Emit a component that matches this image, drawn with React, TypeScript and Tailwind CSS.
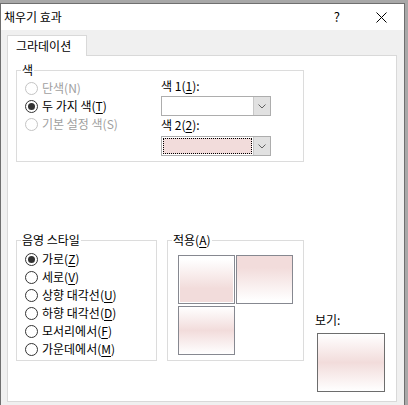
import type { ReactNode } from "react";

const font = { fontFamily: '"Noto Sans CJK KR", "Noto Sans", sans-serif' };

const Radio = ({
  label,
  checked = false,
  disabled = false,
}: {
  label: ReactNode;
  checked?: boolean;
  disabled?: boolean;
}) => (
  <div className="flex h-[18px] items-center gap-[4px]">
    <span
      className={`flex h-[13px] w-[13px] items-center justify-center rounded-full border bg-white ${
        disabled ? "border-[#c4c4c4]" : "border-[#333333]"
      }`}
    >
      {checked && <span className="h-[7px] w-[7px] rounded-full bg-[#333333]" />}
    </span>
    <span className={disabled ? "text-[#a0a0a0]" : "text-black"}>{label}</span>
  </div>
);

const Group = ({
  label,
  className,
  children,
}: {
  label: ReactNode;
  className: string;
  children: ReactNode;
}) => (
  <div className={`flex flex-col border border-[#dcdcdc] ${className}`}>
    <span className="-mt-[9px] ml-[4px] w-fit bg-white px-[1px] leading-[16px]">{label}</span>
    {children}
  </div>
);

const Combo = ({ focused = false }: { focused?: boolean }) => (
  <div className="flex h-[20px] w-[110px] border border-[#adadad] bg-white">
    <div className="flex flex-1 p-[1px]">
      {focused && <div className="flex-1 border border-dotted border-black bg-[#f2dcdb]" />}
    </div>
    <div className="flex w-[17px] items-center justify-center border-l border-[#c8c8c8] bg-[#e1e1e1]">
      <svg width="8" height="5" viewBox="0 0 8 5">
        <path d="M0.5 0.5 L4 4 L7.5 0.5" fill="none" stroke="#606060" strokeWidth="1" />
      </svg>
    </div>
  </div>
);

export default function App() {
  return (
    <div className="flex h-[405px] w-[408px] bg-[#a8a8a8] text-[12px] text-black" style={font}>
      <div className="mt-[3px] flex w-[405px] flex-col border-x border-t border-[#6f6f6f] bg-[#f0f0f0]">
        {/* title bar */}
        <div className="flex h-[26px] items-center bg-white pl-[3px]">
          <span className="flex-1 leading-[16px]">채우기 효과</span>
          <span className="mr-[36px] text-[13px]">?</span>
          <svg width="11" height="11" viewBox="0 0 11 11" className="mr-[17px]">
            <path d="M0.5 0.5 L10.5 10.5 M10.5 0.5 L0.5 10.5" stroke="#000" strokeWidth="1" />
          </svg>
        </div>

        {/* tabs */}
        <div className="ml-[6px] mt-[5px] flex">
          <div className="relative z-10 -mb-[1px] flex h-[21px] w-[80px] items-center border-x border-t border-[#d9d9d9] bg-white pl-[8px] leading-[16px]">
            그라데이션
          </div>
        </div>

        {/* panel */}
        <div className="ml-[6px] flex h-[347px] w-[390px] flex-col border border-[#d9d9d9] bg-white pl-[8px]">
          <Group label="색" className="mt-[14px] h-[92px] w-[288px]">
            <div className="flex">
              <div className="mt-[1px] flex w-[144px] flex-col pl-[8px]">
                <Radio label="단색(N)" disabled />
                <Radio
                  label={
                    <>
                      두 가지 색(<u className="underline-offset-2">T</u>)
                    </>
                  }
                  checked
                />
                <Radio label="기본 설정 색(S)" disabled />
              </div>
              <div className="flex flex-col">
                <span className="leading-[16px]">
                  색 1(<u className="underline-offset-2">1</u>):
                </span>
                <div className="mt-[2px]">
                  <Combo />
                </div>
                <span className="mt-[1px] leading-[16px]">
                  색 2(<u className="underline-offset-2">2</u>):
                </span>
                <div className="mt-[3px]">
                  <Combo focused />
                </div>
              </div>
            </div>
          </Group>

          <div className="mt-[78px] flex items-start">
            <Group label="음영 스타일" className="h-[121px] w-[141px]">
              <div className="mt-[2px] flex flex-col pl-[8px]">
                <Radio label={<>가로(<u className="underline-offset-2">Z</u>)</>} checked />
                <Radio label={<>세로(<u className="underline-offset-2">V</u>)</>} />
                <Radio label={<>상향 대각선(<u className="underline-offset-2">U</u>)</>} />
                <Radio label={<>하향 대각선(<u className="underline-offset-2">D</u>)</>} />
                <Radio label={<>모서리에서(<u className="underline-offset-2">F</u>)</>} />
                <Radio label={<>가운데에서(<u className="underline-offset-2">M</u>)</>} />
              </div>
            </Group>

            <Group
              label={<>적용(<u className="underline-offset-2">A</u>)</>}
              className="ml-[10px] h-[121px] w-[137px]"
            >
              <div className="ml-[10px] mt-[7px] grid grid-cols-[57px_57px] grid-rows-[49px_49px] gap-x-[1px] gap-y-[2px]">
                <div className="border border-[#868890] bg-white p-[1px]">
                  <div className="h-full w-full bg-[linear-gradient(to_bottom,#ffffff_5%,#f2dcdb_70%)]" />
                </div>
                <div className="border border-[#868890] bg-[linear-gradient(to_bottom,#f2dcdb_25%,#ffffff_95%)]" />
                <div className="border border-[#868890] bg-[linear-gradient(to_bottom,#ffffff_0%,#f2dcdb_50%,#ffffff_100%)]" />
              </div>
            </Group>

            <div className="ml-[11px] mt-[72px] flex flex-col">
              <span className="leading-[16px]">보기:</span>
              <div className="ml-[2px] mt-[5px] h-[59px] w-[68px] border border-[#6d6d6d] bg-[linear-gradient(to_bottom,#ffffff_0%,#f2dcdb_50%,#ffffff_100%)]" />
            </div>
          </div>
        </div>
      </div>
    </div>
  );
}
